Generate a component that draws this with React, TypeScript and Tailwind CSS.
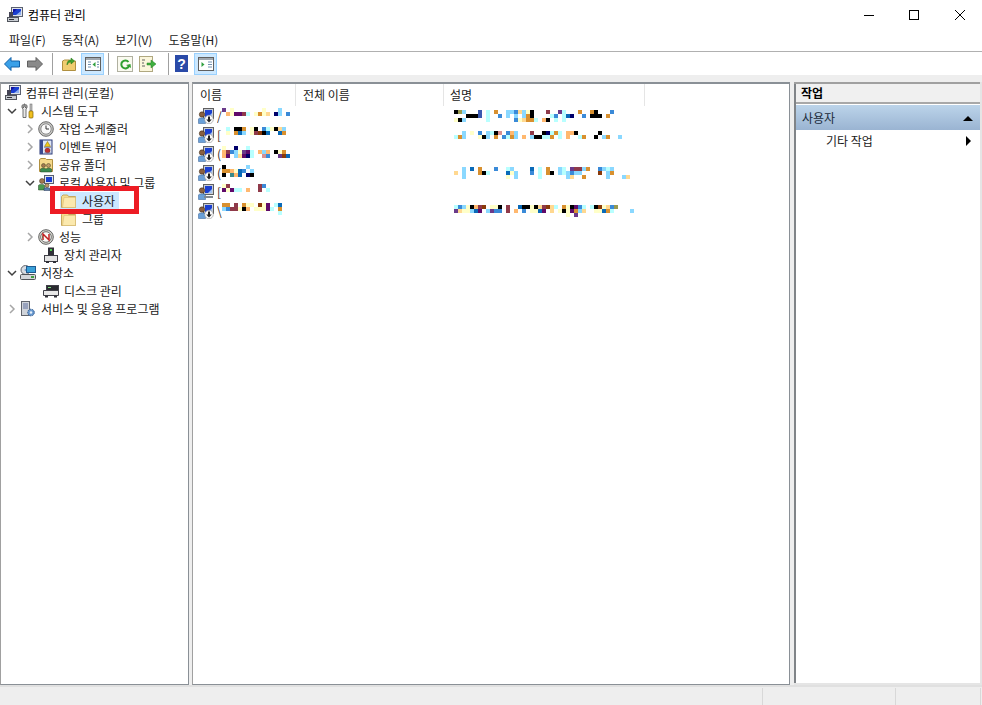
import React from "react";

const pal: Record<string, string> = {
  k: "#000000", n: "#00006a", p: "#5f0a6a", m: "#8f3a4a", o: "#d8902f", a: "#ffb86f", y: "#ffffc8", g: "#ffd890",
  c: "#b8ffff", l: "#8ad8ff", b: "#3a8ad8", d: "#0a6ab8", r: "#8a3a0a", v: "#6a3a8a", t: "#3a8a8a", i: "#989a50", s: "#d89090", e: "#3a5ab0",
};

function Mosaic({ rows, className }: { rows: string[]; className: string }) {
  const cols = Math.max(...rows.map((r) => r.length));
  return (
    <svg width={cols * 4} height={rows.length * 4} shapeRendering="crispEdges" className={className}>
      {rows.flatMap((r, y) =>
        r.split("").map((ch, x) => (pal[ch] ? <rect key={`${x}-${y}`} x={x * 4} y={y * 4} width="4" height="4" fill={pal[ch]} /> : null))
      )}
    </svg>
  );
}

const Ico = ({ children, className = "" }: { children: React.ReactNode; className?: string }) => (
  <svg width="16" height="16" viewBox="0 0 16 16" className={`shrink-0 ${className}`}>{children}</svg>
);

const Computer = () => (
  <Ico>
    <rect x="4.5" y="0.5" width="11" height="9" fill="#dfe3ea" stroke="#5a6070" />
    <rect x="6" y="2" width="8" height="6" fill="#1a3fd0" />
    <path d="M6 2h4l-4 4z" fill="#1010a0" />
    <path d="M9 8h5V4z" fill="#8fb0f0" />
    <rect x="0.5" y="10.5" width="11" height="4" fill="#c8ccd2" stroke="#50545c" />
    <rect x="2" y="12" width="5" height="1" fill="#303038" />
    <rect x="2" y="5" width="4" height="5" fill="#445" />
  </Ico>
);
const Tools = () => (
  <Ico>
    <path d="M4 1v3l-1 1V1.5C1.5 2.5 1.5 5 3 6v8.5h3V6c1.5-1 1.5-3.5 0-4.500V5L5 4V1z" fill="#e8e8e8" stroke="#505050" strokeWidth="0.8" />
    <rect x="10" y="1" width="2" height="7" fill="#c0c0c0" stroke="#606060" strokeWidth="0.5" />
    <rect x="9" y="8" width="4" height="7" rx="1" fill="#f0c020" stroke="#806000" strokeWidth="0.7" />
  </Ico>
);
const Clock = () => (
  <Ico>
    <circle cx="8" cy="8" r="7.300" fill="#c8c8c4" stroke="#6a6a6a" />
    <circle cx="8" cy="8" r="5.200" fill="#fafafa" stroke="#8a8a8a" />
    <path d="M8 4.500V8h3" fill="none" stroke="#333" strokeWidth="1" />
  </Ico>
);
const EventLog = () => (
  <Ico>
    <rect x="2" y="1" width="12" height="14" fill="#dfe6f5" stroke="#2a3a78" />
    <rect x="2" y="1" width="3" height="14" fill="#3a4a90" />
    <path d="M9.500 2.500l3 5h-6z" fill="#f0c818" stroke="#806000" strokeWidth="0.5" />
    <circle cx="9.500" cy="11.500" r="2.500" fill="#c03030" stroke="#702020" strokeWidth="0.5" />
    <path d="M6 8.500h7M6 14h7" stroke="#7080b0" strokeWidth="0.7" />
  </Ico>
);
const Folder = () => (
  <Ico>
    <path d="M0.500 3.500v11h14v-11h-7l-1-1.500h-4.500z" fill="#f6dc8c" stroke="#c6a860" />
    <path d="M3 4.500h11.500v10h-13z" fill="#fbe9ae" stroke="#d8bc74" strokeWidth="0.6" />
  </Ico>
);
const SharedFolder = () => (
  <Ico>
    <path d="M1.500 2.500v12h13v-12h-6l-1-1h-4.500z" fill="#f4d88a" stroke="#b09040" />
    <circle cx="5.500" cy="8.500" r="2" fill="#a07850" stroke="#404020" strokeWidth="0.5" />
    <circle cx="10.500" cy="8.500" r="2" fill="#c09868" stroke="#404020" strokeWidth="0.5" />
    <path d="M2.500 15v-3c0-1 5-1 5.500 0 .5-1 5-1 5.500 0v3z" fill="#3a8a50" stroke="#204020" strokeWidth="0.5" />
  </Ico>
);
const LocalUsers = () => (
  <Ico>
    <rect x="6.500" y="0.500" width="9" height="8" fill="#dfe3ea" stroke="#5a6070" />
    <rect x="8" y="2" width="6" height="5" fill="#1a3fd0" />
    <circle cx="4" cy="6" r="2.500" fill="#a07850" stroke="#403020" strokeWidth="0.5" />
    <path d="M0.500 15v-4.500c0-1.500 6-1.500 6 0V15z" fill="#4a9a50" stroke="#204020" strokeWidth="0.5" />
    <circle cx="9" cy="10.500" r="2" fill="#c09868" stroke="#403020" strokeWidth="0.5" />
    <path d="M6 15.500v-2c0-1 6-1 6 0v2z" fill="#5a80b0" stroke="#203050" strokeWidth="0.5" />
  </Ico>
);
const Perf = () => (
  <Ico>
    <circle cx="8" cy="8" r="7.300" fill="#d8d8d0" stroke="#606060" />
    <circle cx="8" cy="8" r="5.300" fill="#fbfbf8" stroke="#707070" />
    <path d="M5 11V5l6 6V5" fill="none" stroke="#c02020" strokeWidth="1.500" />
    <path d="M4 8h1" stroke="#308030" />
  </Ico>
);
const Device = () => (
  <Ico>
    <rect x="5" y="0.500" width="6" height="8" fill="#303038" />
    <rect x="7" y="2" width="2" height="2" fill="#50d050" />
    <rect x="1.500" y="8.500" width="13" height="6" fill="#e4e4e4" stroke="#404048" />
    <rect x="3" y="14" width="3" height="2" fill="#303038" />
    <rect x="10" y="14" width="3" height="2" fill="#303038" />
  </Ico>
);
const Storage = () => (
  <Ico>
    <ellipse cx="5.500" cy="5" rx="4.500" ry="4.500" fill="#d8dce2" stroke="#60646c" />
    <circle cx="5.500" cy="5" r="1" fill="#70a0d0" />
    <rect x="6.500" y="1.500" width="9" height="6" fill="#3aa0d8" stroke="#205a90" />
    <rect x="0.500" y="9.500" width="15" height="5" rx="1" fill="#d4d6da" stroke="#505458" />
    <rect x="11" y="11" width="3" height="2" fill="#40a040" />
  </Ico>
);
const Disk = () => (
  <Ico>
    <rect x="3.500" y="2.500" width="12" height="5" fill="#2a2a30" stroke="#404048" />
    <rect x="5" y="4" width="3" height="1" fill="#80e080" />
    <path d="M0.500 7.500h15v5h-15z" fill="#e8e8e8" stroke="#404048" />
    <rect x="2" y="12.500" width="3" height="2" fill="#303038" />
    <rect x="11" y="12.500" width="3" height="2" fill="#303038" />
  </Ico>
);
const Services = () => (
  <Ico>
    <rect x="1.500" y="0.500" width="8" height="14" fill="#d0d4da" stroke="#60646c" />
    <path d="M3 3h5M3 5h5M3 7h5" stroke="#6070a0" />
    <circle cx="11" cy="11.500" r="3.300" fill="#6a9ad0" stroke="#305a90" strokeDasharray="1.500 0.800" />
    <circle cx="11" cy="11.500" r="1.200" fill="#e8f0f8" />
  </Ico>
);
const UserRow = ({ disabled = false }: { disabled?: boolean }) => (
  <Ico>
    <rect x="5.500" y="0.500" width="10" height="10" fill="#c8ccd4" stroke="#606060" />
    <rect x="7" y="2" width="7" height="7" fill="#1a3fd0" />
    <path d="M10 9h4V5z" fill="#a0c0f0" />
    <circle cx="4" cy="6.500" r="2.700" fill="#8a6040" stroke="#302010" strokeWidth="0.5" />
    <path d="M0.500 15.500v-4.500c0-1.500 7-1.500 7 0v4.500z" fill="#6aa0d8" stroke="#305a90" strokeWidth="0.5" />
    {disabled ? (
      <path d="M6 12h9v2h-9z" fill="#808890" />
    ) : (
      <>
        <circle cx="11" cy="11.500" r="4.300" fill="#fafafa" stroke="#909090" strokeWidth="0.6" />
        <path d="M10 8.500h2v3h1.800l-2.800 3-2.800-3h1.800z" fill="#202020" />
      </>
    )}
  </Ico>
);

const Chevron = ({ open, dark }: { open?: boolean; dark?: boolean }) =>
  open ? (
    <svg width="12" height="12" viewBox="0 0 12 12" className="shrink-0">
      <path d="M2 4l4 4 4-4" fill="none" stroke="#404040" strokeWidth="1.500" />
    </svg>
  ) : (
    <svg width="12" height="12" viewBox="0 0 12 12" className="shrink-0">
      <path d="M4 2l4 4-4 4" fill="none" stroke={dark ? "#808080" : "#a6a6a6"} strokeWidth="1.500" />
    </svg>
  );

function TreeRow({ pad, chev, icon, text, textClass = "" }: { pad: string; chev?: "open" | "closed"; icon: React.ReactNode; text: string; textClass?: string }) {
  return (
    <div className={`flex h-[18px] items-center ${pad}`}>
      {chev && <span className="mr-[2px]"><Chevron open={chev === "open"} /></span>}
      {icon}
      <span className={`ml-[5px] whitespace-pre text-[12px] leading-[18px] text-[#1a1a1a] ${textClass}`}>{text}</span>
    </div>
  );
}

const names = [
  { g: "/", rows: ["v.y.......y...l...", ".aypp" + "mc.yoygb.nl.b".slice(0, 0) + "mc.yoyg.nl.b"] },
  { g: "[", rows: [".c.kkо".replace("о", "o") + ".y k".replace(" ", "") + ".bcykgl", ".y.odl.ymrkd..do"] },
  { g: "(", rows: ["y..n..c", "ambly vp".replace(" ", "") + "c.ala.kyo", "ap.lgpnc..sb..vrd"] },
  { g: "(", rows: ["k.....l", "ooaydb.l", "k.tad.nk"] },
  { g: "[", rows: ["ym.......mb", "pypcc.a..m.c"] },
  { g: "\\", rows: ["oo.m.oyy.ryp.cd", "lbmmyka.yyypc.o", "..............c"] },
];

const descs: (string[] | null)[] = [
  [
    "kil...e.c.o..llbgly k...m..vc...o..ok...b".replace(" ", ""),
    "...kkke.c..b.l.l.lok....cb.cdn..b.kkk.o",
    "ykl.....c......bygooc.ak.c.c",
  ],
  [
    "..l.y.b.lcks.bal...m..kncoc.aak.....k",
    "col...ykl.o.bcol.a.lkkcco.c.a..co..k.lo..l",
  ],
  null,
  [
    "..l.d.o...b..cl....d.c.o..lc.vmmlo..blcl",
    "g.l...okc....dyl...b.c.ok.lclbll....r.lo",
    "..l..........y.l.....c......lg..o.....l...lg",
  ],
  null,
  [
    "cblykamr.yyk.m..dkky".slice(0, 20) + "kgmrgc.oykpbc.ckrygbi",
    "vgyyldp.lvbb.m.a.b.yydp.g.ykypolg..yydoc....l",
    "............................y.v",
  ],
];

function MenuText({ children }: { children: string }) {
  return <span className="whitespace-pre text-[12px] leading-[18px] text-[#1a1a1a]">{children}</span>;
}

const Sep = () => <div className="mx-[4px] h-[22px] w-px bg-[#a0a0a0]" />;

export default function App() {
  return (
    <div className="relative flex h-[705px] w-[982px] flex-col overflow-hidden bg-white font-['Noto_Sans_CJK_KR','Noto_Sans',sans-serif]">
      {/* title bar */}
      <div className="flex h-[30px] shrink-0 items-center pl-[7px]">
        <Computer />
        <span className="ml-[5px] text-[12px] leading-[18px] text-black">컴퓨터 관리</span>
        <div className="ml-auto flex items-center pr-[17px]">
          <div className="h-px w-[10px] bg-black" />
          <div className="ml-[35px] h-[10px] w-[10px] border border-black" />
          <svg width="10" height="10" viewBox="0 0 10 10" className="ml-[36px]">
            <path d="M0 0l10 10M10 0L0 10" stroke="#000" strokeWidth="1" />
          </svg>
        </div>
      </div>
      {/* menu */}
      <div className="flex h-[22px] shrink-0 items-center gap-[16px] border-b border-[#b0b0b0] pl-[9px] pb-[1px]">
        <MenuText>파일(F)</MenuText>
        <MenuText>동작(A)</MenuText>
        <MenuText>보기(V)</MenuText>
        <MenuText>도움말(H)</MenuText>
      </div>
      {/* toolbar */}
      <div className="flex h-[23px] shrink-0 items-center pl-[4px]">
        <svg width="16" height="14" viewBox="0 0 16 14">
          <path d="M0.500 7L7 0.500V4h8.500v6H7v3.500z" fill="#3aa0e8" stroke="#1060a8" />
        </svg>
        <svg width="16" height="14" viewBox="0 0 16 14" className="ml-[7px]">
          <path d="M15.500 7L9 0.500V4H0.500v6H9v3.500z" fill="#8a8a8a" stroke="#606060" />
        </svg>
        <div className="ml-[5px]"><Sep /></div>
        <svg width="15" height="15" viewBox="0 0 15 15" className="ml-[5px]">
          <path d="M0.500 5v9.500h13V5h-5l-1-1h-5z" fill="#f0cc70" stroke="#b09040" />
          <path d="M5 9c0-4 2-5 4-5V2l3.500 3L9 8V6C7 6 6 7 5 9z" fill="#40a030" stroke="#207010" strokeWidth="0.5" />
        </svg>
        <div className="ml-[4px] flex h-[22px] w-[23px] items-center justify-center border border-[#99d1ff] bg-[#cce8ff]">
          <svg width="16" height="14" viewBox="0 0 16 14">
            <rect x="0.500" y="0.500" width="15" height="13" fill="#fff" stroke="#606060" />
            <rect x="1" y="1" width="14" height="2" fill="#a0a8b0" />
            <path d="M3 5h3M3 7.500h3M3 10h3M12 5h2M12 7.500h2M12 10h2" stroke="#7090b0" />
            <path d="M10.500 5v5L7.500 7.500z" fill="#30a040" />
          </svg>
        </div>
        <Sep />
        <svg width="16" height="16" viewBox="0 0 16 16" className="ml-[4px]">
          <rect x="0.500" y="0.500" width="15" height="15" fill="#fafaf0" stroke="#b0b0a0" />
          <path d="M11.500 6A4 4 0 1 0 12 10" fill="none" stroke="#30a030" strokeWidth="2" />
          <path d="M9 9l4.500-1 .5 4z" fill="#30a030" />
        </svg>
        <svg width="18" height="16" viewBox="0 0 18 16" className="ml-[6px]">
          <rect x="0.500" y="0.500" width="13" height="15" fill="#fbf6dc" stroke="#b0a880" />
          <path d="M3 4h3M3 7h2M3 10h3" stroke="#606060" />
          <path d="M8 7h4V4l5 4-5 4V9H8z" fill="#40b040" stroke="#208020" strokeWidth="0.5" />
        </svg>
        <div className="ml-[7px]"><Sep /></div>
        <div className="ml-[2px] flex h-[17px] w-[13px] items-center justify-center bg-[#2a4aa8] text-[14px] font-bold leading-none text-white font-['Liberation_Sans',sans-serif]">?</div>
        <div className="ml-[6px] flex h-[22px] w-[23px] items-center justify-center border border-[#99d1ff] bg-[#cce8ff]">
          <svg width="16" height="14" viewBox="0 0 16 14">
            <rect x="0.500" y="0.500" width="15" height="13" fill="#fff" stroke="#606060" />
            <rect x="1" y="1" width="14" height="2" fill="#a0a8b0" />
            <path d="M10 5h4M10 7.500h4M10 10h4" stroke="#7090b0" />
            <path d="M3.500 5v5l3-2.500z" fill="#30a040" />
          </svg>
        </div>
      </div>
      {/* main */}
      <div className="flex min-h-0 flex-1 gap-[3px] bg-[#eeeeee] pt-[7px]">
        {/* tree */}
        <div className="w-[189px] shrink-0 border border-t-2 border-[#8a9096] border-l-[#a0a0a0] bg-white pt-[0px]">
          <TreeRow pad="pl-[4px]" icon={<Computer />} text="컴퓨터 관리(로컬)" />
          <TreeRow pad="pl-[5px]" chev="open" icon={<Tools />} text="시스템 도구" />
          <TreeRow pad="pl-[23px]" chev="closed" icon={<Clock />} text="작업 스케줄러" />
          <TreeRow pad="pl-[23px]" chev="closed" icon={<EventLog />} text="이벤트 뷰어" />
          <TreeRow pad="pl-[23px]" chev="closed" icon={<SharedFolder />} text="공유 폴더" />
          <TreeRow pad="pl-[23px]" chev="open" icon={<LocalUsers />} text="로컬 사용자 및 그룹" />
          <div className="flex h-[18px] items-center pl-[59px]">
            <div className="flex h-[18px] items-center bg-[#cce8ff] pl-px pr-[4px]">
              <Folder />
              <span className="ml-[5px] text-[12px] leading-[18px] text-[#1a1a1a]">사용자</span>
            </div>
          </div>
          <TreeRow pad="pl-[60px]" icon={<Folder />} text="그룹" />
          <TreeRow pad="pl-[23px]" chev="closed" icon={<Perf />} text="성능" />
          <TreeRow pad="pl-[42px]" icon={<Device />} text="장치 관리자" />
          <TreeRow pad="pl-[5px]" chev="open" icon={<Storage />} text="저장소" />
          <TreeRow pad="pl-[42px]" icon={<Disk />} text="디스크 관리" />
          <TreeRow pad="pl-[5px]" chev="closed" icon={<Services />} text="서비스 및 응용 프로그램" />
        </div>
        {/* list */}
        <div className="w-[598px] shrink-0 border border-t-2 border-[#8a9096] border-l-[#a0a0a0] bg-white">
          <div className="flex h-[22px] items-center text-[12px] text-[#1a1a1a]">
            <div className="flex h-[22px] w-[103px] items-center border-r border-[#e5e5e5] pl-[7px]">이름</div>
            <div className="flex h-[22px] w-[148px] items-center border-r border-[#e5e5e5] pl-[7px]">전체 이름</div>
            <div className="flex h-[22px] w-[201px] items-center border-r border-[#e5e5e5] pl-[6px]">설명</div>
          </div>
          {names.map((n, i) => (
            <div key={i} className="flex h-[19px] items-center pl-[5px]">
              <UserRow disabled={i === 4} />
              <span className="ml-[3px] w-[5px] overflow-hidden text-[12px] leading-[18px] text-[#3a2a1a]">{n.g}</span>
              <div className="h-[16px] w-[231px] shrink-0 pl-[0px]">
                <Mosaic rows={n.rows} className="block" />
              </div>
              {descs[i] && <Mosaic rows={descs[i] as string[]} className="ml-[1px] block" />}
            </div>
          ))}
        </div>
        {/* actions */}
        <div className="ml-[1px] flex flex-1 flex-col border-b-2 border-r-2 border-[#e5e5e5] bg-white">
          <div className="h-[2px] bg-[#a0a0a0]" />
          <div className="flex min-h-0 flex-1 flex-col border-l-2 border-[#808488]">
            <div className="flex h-[20px] items-center border-b-2 border-[#a8a8a8] bg-[#f0f0f0] pl-[5px] text-[12px] font-bold text-black">작업</div>
            <div className="mt-[1px] flex h-[25px] items-center bg-gradient-to-b from-[#bcd4ea] to-[#9ab4d2] pl-[6px] pr-[5px] text-[12px] text-[#1a2a3a]">
              <span>사용자</span>
              <svg width="10" height="6" viewBox="0 0 10 6" className="ml-auto mr-[2px]"><path d="M0 6l5-5 5 5z" fill="#000" /></svg>
            </div>
            <div className="flex h-[22px] items-center pl-[30px] pr-[5px] text-[12px] text-[#1a1a1a]">
              <span>기타 작업</span>
              <svg width="6" height="10" viewBox="0 0 6 10" className="ml-auto mr-[3px]"><path d="M0 0l5 5-5 5z" fill="#000" /></svg>
            </div>
          </div>
        </div>
      </div>
      {/* status */}
      <div className="flex h-[20px] shrink-0 border-t-2 border-[#e0e0e0] bg-[#eeeeee] pt-[1px]">
        <div className="w-[763px] border-r border-[#d8d8d8]" />
        <div className="w-[133px] border-r border-[#d8d8d8]" />
        <div className="w-[85px] border-r border-[#d8d8d8]" />
      </div>
      {/* annotation */}
      <div className="absolute left-[50px] top-[186px] h-[28px] w-[89px] border-[5px] border-[#ed1c24]" />
    </div>
  );
}
